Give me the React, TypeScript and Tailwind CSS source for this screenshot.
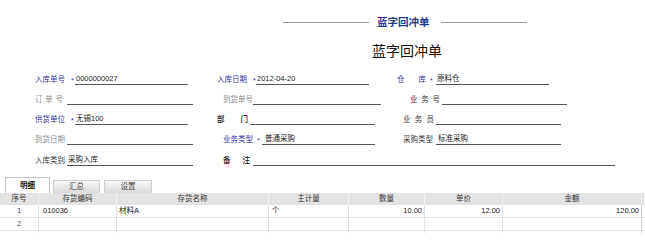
import React from "react"

const font = "font-['Liberation_Sans','Noto_Sans_CJK_SC',sans-serif]"

const Spread = ({ text, className }: { text: string; className: string }) => (
    <span className={`flex justify-between ${className}`}>
        {text.split("").map((c, i) => (
            <span key={i}>{c}</span>
        ))}
    </span>
)

const Star = ({ className }: { className: string }) => (
    <span className={`text-[7px] leading-[10px] mb-[-1px] text-[#2f2f9f] ${className}`}>*</span>
)

const Line = ({ className, value }: { className: string; value?: string }) => (
    <div className={`h-[11px] border-b border-[#555] text-[7.5px] leading-[10px] text-[#222] whitespace-nowrap ${className}`}>
        {value}
    </div>
)

const blue = "text-[#2f2f9f]"
const gray = "text-[#8c8c8c]"
const dark = "text-[#333]"

const Tab = ({ label, active, className }: { label: string; active?: boolean; className: string }) => (
    <div
        className={`flex items-center justify-center border border-b-0 text-[7.5px] ${active
            ? "h-[16px] bg-white border-[#c4c4c4] font-bold text-[#111]"
            : "h-[13px] bg-gradient-to-b from-[#f6f6f6] to-[#dadada] border-[#cfcfcf] text-[#444]"
            } ${className}`}
    >
        {label}
    </div>
)

const cols = "grid grid-cols-[39px_78px_152px_80px_76px_78px_139px_3px]"

const rows = [
    { no: "1", code: "010036", name: "材料A", unit: "个", qty: "10.00", price: "12.00", amount: "120.00" },
    { no: "2", code: "", name: "", unit: "", qty: "", price: "", amount: "" },
    { no: "", code: "", name: "", unit: "", qty: "", price: "", amount: "" },
]

export default function App() {
    return (
        <div className={`w-[645px] h-[233px] overflow-hidden bg-white ${font}`}>
            {/* header strip */}
            <div className="mt-[15px] h-[14px] flex items-center">
                <div className="ml-[283px] w-[86px] h-px bg-[#9a9a9a]" />
                <div className="ml-[8px] text-[10.5px] font-bold text-[#1e3c8c] leading-[14px]">蓝字回冲单</div>
                <div className="ml-[11px] w-[86px] h-px bg-[#9a9a9a]" />
            </div>

            <div className="mt-[14px] h-[16px] pl-[372px] text-[14px] leading-[16px] text-[#111]">蓝字回冲单</div>

            {/* form */}
            <div className="mt-[6px] text-[7.5px] leading-[10px]">
                <div className="h-[20px] flex items-end">
                    <div className="ml-[35px] flex items-end">
                        <span className={`w-[36px] ${blue}`}>入库单号</span>
                        <Star className="w-[4px]" />
                        <Line className="w-[113px] pl-[1px]" value="0000000027" />
                    </div>
                    <div className="ml-[29px] flex items-end">
                        <span className={`w-[36px] ${blue}`}>入库日期</span>
                        <Star className="w-[3px]" />
                        <Line className="w-[113px] pl-[1px]" value="2012-04-20" />
                    </div>
                    <div className="ml-[28px] flex items-end">
                        <span className="w-[33px]">
                            <Spread text="仓库" className={`w-[29px] ${blue}`} />
                        </span>
                        <Star className="w-[6px]" />
                        <Line className="w-[113px] pl-[1px]" value="原料仓" />
                    </div>
                </div>

                <div className="h-[20px] flex items-end">
                    <div className="ml-[35px] flex items-end">
                        <span className="w-[32px]">
                            <Spread text="订单号" className={`w-[28px] ${gray}`} />
                        </span>
                        <Line className="w-[126px]" />
                    </div>
                    <div className="ml-[30px] flex items-end">
                        <span className={`w-[30px] ${gray}`}>到货单号</span>
                        <Line className="w-[128px]" />
                    </div>
                    <div className="ml-[29px] flex items-end">
                        <span className="w-[32px]">
                            <Spread text="业务号" className={`w-[30px] ${dark}`} />
                        </span>
                        <Line className="w-[125px]" />
                    </div>
                </div>

                <div className="h-[20px] flex items-end">
                    <div className="ml-[35px] flex items-end">
                        <span className={`w-[36px] ${blue}`}>供货单位</span>
                        <Star className="w-[4px]" />
                        <Line className="w-[113px] pl-[1px]" value="无锡100" />
                    </div>
                    <div className="ml-[29px] flex items-end">
                        <span className="w-[33px]">
                            <Spread text="部门" className="w-[31px] font-medium text-[#111]" />
                        </span>
                        <Line className="w-[125px]" />
                    </div>
                    <div className="ml-[28px] flex items-end">
                        <span className="w-[33px]">
                            <Spread text="业务员" className={`w-[31px] ${dark}`} />
                        </span>
                        <Line className="w-[125px]" />
                    </div>
                </div>

                <div className="h-[20px] flex items-end">
                    <div className="ml-[35px] flex items-end">
                        <span className={`w-[32px] ${gray}`}>到货日期</span>
                        <Line className="w-[126px]" />
                    </div>
                    <div className="ml-[30px] flex items-end">
                        <span className={`w-[34px] ${blue}`}>业务类型</span>
                        <Star className="w-[5px]" />
                        <Line className="w-[113px] pl-[3px]" value="普通采购" />
                    </div>
                    <div className="ml-[28px] flex items-end">
                        <span className={`w-[33px] ${dark}`}>采购类型</span>
                        <Line className="w-[125px] pl-[2px]" value="标准采购" />
                    </div>
                </div>

                <div className="h-[21px] flex items-end">
                    <div className="ml-[35px] flex items-end">
                        <span className={`w-[32px] ${dark}`}>入库类别</span>
                        <Line className="w-[126px] pl-[1px]" value="采购入库" />
                    </div>
                    <div className="ml-[30px] flex items-end">
                        <span className="w-[30px]">
                            <Spread text="备注" className="w-[27px] font-medium text-[#111]" />
                        </span>
                        <Line className="w-[362px]" />
                    </div>
                </div>
            </div>

            {/* tabs */}
            <div className="mt-[11px] h-[16px] pl-[5px] flex items-end">
                <Tab label="明细" active className="w-[45px]" />
                <Tab label="汇总" className="ml-[3px] w-[47px]" />
                <Tab label="设置" className="ml-[4px] w-[48px]" />
            </div>

            {/* grid */}
            <div className="text-[7.5px] text-[#222]">
                <div className={`${cols} h-[12px] bg-[#e3e3e3] leading-[12px] text-center text-[#333]`}>
                    {["序号", "存货编码", "存货名称", "主计量", "数量", "单价", "金额", ""].map((h, i) => (
                        <div key={i} className="border-r border-[#f2f2f2]">{h}</div>
                    ))}
                </div>
                {rows.map((r, i) => (
                    <div key={i} className={`${cols} h-[13px] leading-[12px] border-b border-[#e2e2e2]`}>
                        <div className={`text-center border-r border-[#e2e2e2] ${r.no === "1" ? "text-[#3535a8]" : "text-[#555]"}`}>{r.no}</div>
                        <div className="pl-[4px] border-r border-[#e2e2e2]">{r.code}</div>
                        <div className="pl-[2px] border-r border-[#e2e2e2]">{r.name}</div>
                        <div className="pl-[3px] border-r border-[#e2e2e2]">{r.unit}</div>
                        <div className="pr-[2px] text-right border-r border-[#e2e2e2]">{r.qty}</div>
                        <div className="pr-[2px] text-right border-r border-[#e2e2e2]">{r.price}</div>
                        <div className="pr-[2px] text-right border-r border-[#cfcfcf]">{r.amount}</div>
                        <div />
                    </div>
                ))}
            </div>
        </div>
    )
}
